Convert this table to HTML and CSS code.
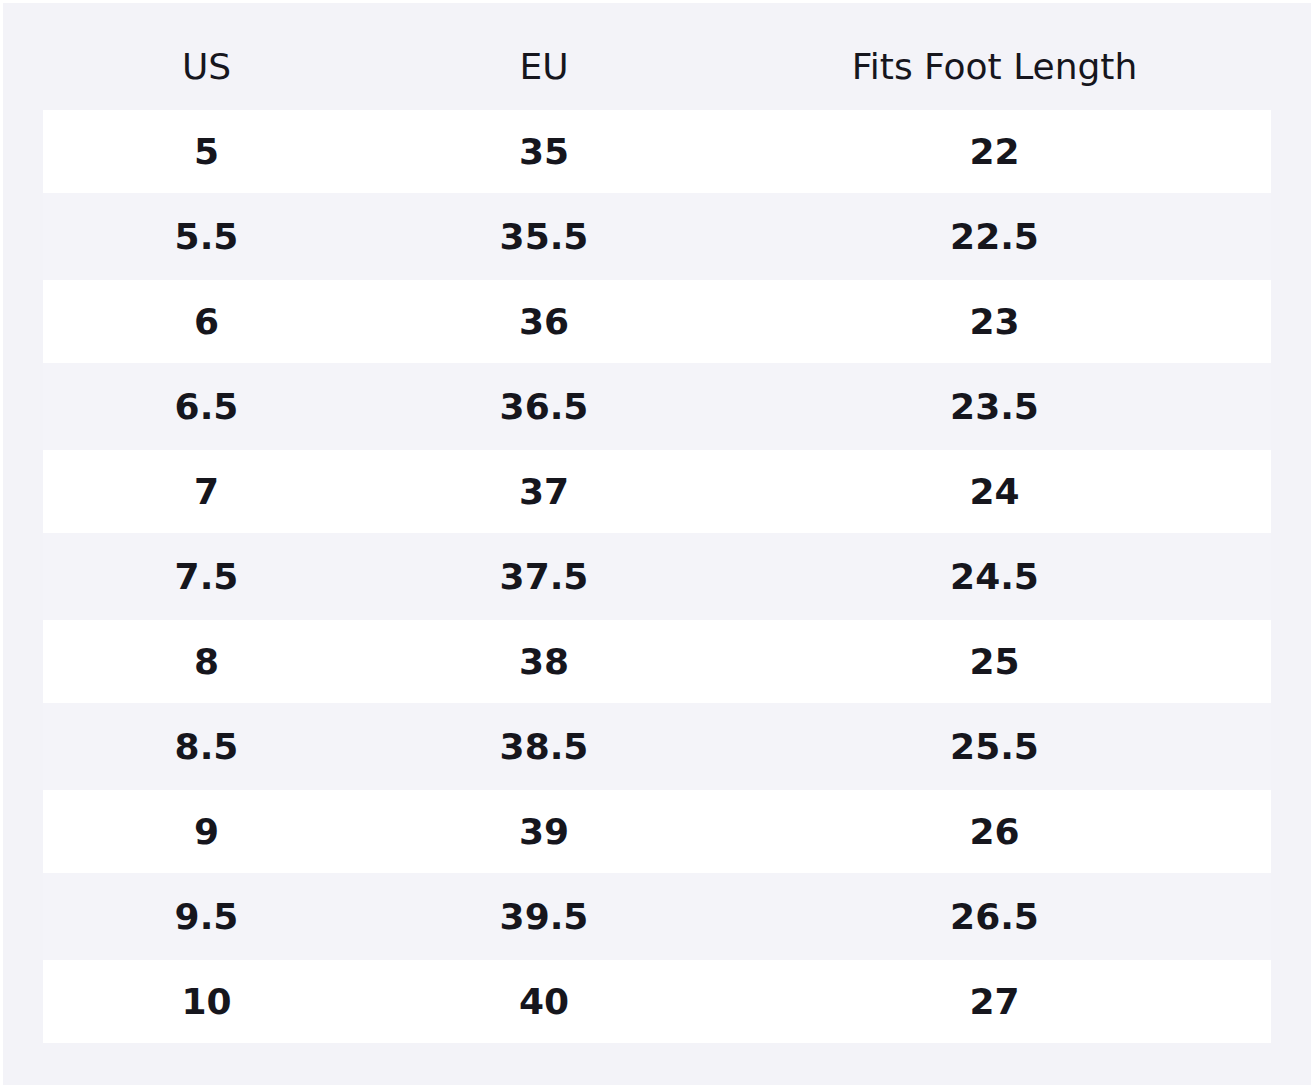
FILE: index.html
```html
<!DOCTYPE html>
<html>
<head>
<meta charset="utf-8">
<link rel="stylesheet" href="styles.css">
</head>
<body>
<div class="panel">
  <div class="head">
    <div>US</div><div>EU</div><div>Fits Foot Length</div>
  </div>
  <div class="row odd"><div>5</div><div>35</div><div>22</div></div>
  <div class="row even"><div>5.5</div><div>35.5</div><div>22.5</div></div>
  <div class="row odd"><div>6</div><div>36</div><div>23</div></div>
  <div class="row even"><div>6.5</div><div>36.5</div><div>23.5</div></div>
  <div class="row odd"><div>7</div><div>37</div><div>24</div></div>
  <div class="row even"><div>7.5</div><div>37.5</div><div>24.5</div></div>
  <div class="row odd"><div>8</div><div>38</div><div>25</div></div>
  <div class="row even"><div>8.5</div><div>38.5</div><div>25.5</div></div>
  <div class="row odd"><div>9</div><div>39</div><div>26</div></div>
  <div class="row even"><div>9.5</div><div>39.5</div><div>26.5</div></div>
  <div class="row odd"><div>10</div><div>40</div><div>27</div></div>
</div>
</body>
</html>
```
FILE: styles.css
```css
html, body {
  margin: 0;
  background: #ffffff;
}
body {
  padding: 3px;
  font-family: "DejaVu Sans", sans-serif;
  color: #16161d;
}
.panel {
  width: 1308px;
  height: 1082px;
  box-sizing: border-box;
  background: #f3f3f8;
  padding: 40px 40px 42px;
}
.head, .row {
  display: grid;
  grid-template-columns: 327px 348px 1fr;
  text-align: center;
  align-items: center;
}
.head {
  font-size: 36px;
  line-height: 48px;
  height: 67px;
  align-items: start;
}
.row {
  font-size: 36px;
  font-weight: bold;
  line-height: 48px;
}
.odd {
  background: #ffffff;
  height: 83px;
}
.even {
  background: #f4f4f9;
  height: 87px;
}
```
